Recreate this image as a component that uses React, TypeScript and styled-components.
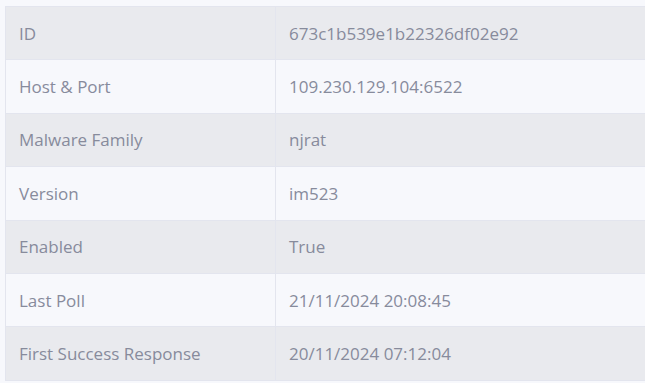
import styled, { createGlobalStyle } from 'styled-components';

const GlobalStyle = createGlobalStyle`
    html, body {
        margin: 0;
        padding: 0;
        background: #f7f8fc;
        overflow: hidden;
    }
    body {
        font-family: 'Open Sans', 'Noto Sans', sans-serif;
    }
`;

const rows: [string, string][] = [
    ['ID', '673c1b539e1b22326df02e92'],
    ['Host & Port', '109.230.129.104:6522'],
    ['Malware Family', 'njrat'],
    ['Version', 'im523'],
    ['Enabled', 'True'],
    ['Last Poll', '21/11/2024 20:08:45'],
    ['First Success Response', '20/11/2024 07:12:04'],
];

// table runs off the right edge of the window, so clip it there
const Wrap = styled.div`
    margin: 6px 0 0 5px;
    width: 640px;
    overflow: hidden;
`;

const Table = styled.table`
    width: 660px;
    border-collapse: collapse;
    border: 1px solid #e3e5ee;
`;

const Row = styled.tr<{ $striped: boolean }>`
    background: ${(p) => (p.$striped ? '#e9eaee' : '#f7f8fc')};
    border-bottom: 1px solid #e3e5ee;
`;

const Cell = styled.td<{ $label?: boolean }>`
    height: 53.4px;
    padding: 0 13px;
    box-sizing: border-box;
    font-size: 17px;
    color: #878b9c;
    vertical-align: middle;
    width: ${(p) => (p.$label ? '270px' : 'auto')};
    border-right: 1px solid #e3e5ee;
    white-space: nowrap;
`;

export default function App() {
    return (
        <>
            <GlobalStyle />
            <Wrap>
                <Table>
                    <tbody>
                        {rows.map(([label, value], i) => (
                            <Row key={label} $striped={i % 2 === 0}>
                                <Cell $label>{label}</Cell>
                                <Cell>{value}</Cell>
                            </Row>
                        ))}
                    </tbody>
                </Table>
            </Wrap>
        </>
    );
}
